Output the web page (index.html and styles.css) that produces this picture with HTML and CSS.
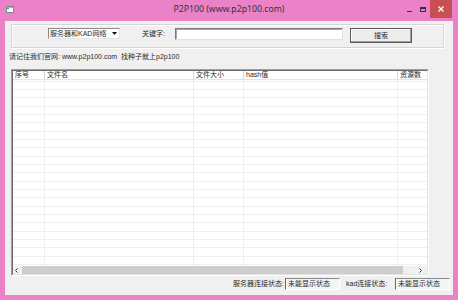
FILE: index.html
```html
<!DOCTYPE html>
<html lang="zh-CN">
<head>
<meta charset="utf-8">
<title>P2P100</title>
<link rel="stylesheet" href="styles.css">
</head>
<body>
<div class="window">
  <div class="titlebar">
    <div class="app-icon">
      <svg width="8" height="7" viewBox="0 0 8 7"><rect x="0.5" y="0.5" width="7" height="6" fill="#fff" stroke="#7d8c8c"/><rect x="1" y="1" width="2" height="2" fill="#3aa37a"/><rect x="1" y="1" width="6" height="1" fill="#9fb5c8"/></svg>
    </div>
    <div class="title">P2P100 (www.p2p100.com)</div>
    <div class="controls">
      <span class="ctl min"><span class="dash"></span></span>
      <span class="ctl max"><span class="square"></span></span>
      <span class="ctl close"><svg width="6" height="6" viewBox="0 0 6 6"><path d="M0.5 0.5L5.5 5.5M5.5 0.5L0.5 5.5" stroke="#fff" stroke-width="1.3"/></svg></span>
    </div>
  </div>
  <div class="client">
    <div class="groupbox">
      <div class="combo">
        <span class="combo-text">服务器和KAD网络</span>
        <span class="combo-btn"><svg width="5" height="3" viewBox="0 0 5 3"><path d="M0 0H5L2.5 3Z" fill="#111"/></svg></span>
      </div>
      <span class="kw-label">关键字:</span>
      <div class="input"></div>
      <div class="button">搜索</div>
    </div>
    <div class="info">请记住我们官网: www.p2p100.com&nbsp;&nbsp;找种子就上p2p100</div>
    <div class="list">
      <div class="list-inner">
        <div class="header">
          <div class="hcol c1">序号</div>
          <div class="hcol c2">文件名</div>
          <div class="hcol c3">文件大小</div>
          <div class="hcol c4">hash值</div>
          <div class="hcol c5">资源数</div>
        </div>
        <div class="body">
          <div class="bcol c1"></div>
          <div class="bcol c2"></div>
          <div class="bcol c3"></div>
          <div class="bcol c4"></div>
          <div class="bcol c5"></div>
        </div>
        <div class="hscroll">
          <span class="arrow left"><svg width="3" height="5" viewBox="0 0 3 5"><path d="M2.5 0.5L0.5 2.5L2.5 4.5" fill="none" stroke="#333" stroke-width="1"/></svg></span>
          <span class="thumb"></span>
          <span class="track"></span>
          <span class="arrow right"><svg width="3" height="5" viewBox="0 0 3 5"><path d="M0.5 0.5L2.5 2.5L0.5 4.5" fill="none" stroke="#333" stroke-width="1"/></svg></span>
        </div>
      </div>
    </div>
    <div class="status">
      <span class="st-label l1">服务器连接状态:</span>
      <span class="st-box">未能显示状态</span>
      <span class="st-label l2">kad连接状态:</span>
      <span class="st-box">未能显示状态</span>
    </div>
  </div>
</div>
</body>
</html>
```
FILE: styles.css
```css
* { box-sizing: border-box; }
html, body { margin: 0; padding: 0; }
body {
  width: 458px;
  height: 300px;
  overflow: hidden;
  background: #eb82c8;
  font-family: "Liberation Sans", "Noto Sans CJK SC", sans-serif;
  font-size: 7px;
  color: #2a2a2a;
}
.window {
  width: 458px;
  height: 300px;
  display: flex;
  flex-direction: column;
  background: #eb82c8;
}
.titlebar {
  height: 21px;
  flex: none;
  display: grid;
  grid-template-columns: 1fr auto 1fr;
  align-items: start;
}
.app-icon { padding: 6px 0 0 6px; height: 21px; }
.app-icon svg { display: block; }
.title {
  font-family: "Noto Sans", sans-serif;
  font-size: 8.7px;
  line-height: 19px;
  color: #333;
  white-space: nowrap;
}
.controls {
  display: flex;
  justify-content: flex-end;
  padding-right: 6px;
}
.ctl {
  height: 18px;
  display: flex;
  align-items: center;
  justify-content: center;
}
.min { width: 14px; }
.max { width: 14px; }
.close { width: 22px; background: #c75050; }
.close svg { display: block; }
.dash { width: 5px; height: 1px; background: #333; margin-top: 4px; }
.square { width: 6px; height: 5px; border: 1px solid #333; border-top-width: 2px; }

.client {
  flex: 1;
  margin: 0 5px 5px 5px;
  background: #f0f0f0;
  display: flex;
  flex-direction: column;
}
.groupbox {
  margin: 3px 0 0 6px;
  width: 433px;
  height: 24px;
  border: 1px solid #d5d5d5;
  box-shadow: inset 1px 1px 0 #fff, 1px 1px 0 #fff;
  display: flex;
  align-items: flex-start;
  padding-top: 3px;
}
.combo {
  margin-left: 36px;
  width: 72px;
  height: 11px;
  background: #fff;
  border: 1px solid;
  border-color: #8a8a8a #e3e3e3 #e3e3e3 #8a8a8a;
  display: flex;
  align-items: center;
}
.combo-text {
  flex: 1;
  padding-left: 1px;
  line-height: 9px;
  white-space: nowrap;
  overflow: hidden;
}
.combo-btn {
  width: 10px;
  height: 9px;
  display: flex;
  align-items: center;
  justify-content: center;
}
.combo-btn svg { display: block; }
.kw-label {
  margin-left: 22px;
  width: 33px;
  line-height: 12px;
  white-space: nowrap;
}
.input {
  width: 168px;
  height: 12px;
  background: #fff;
  border: 1px solid;
  border-color: #7a7a7a #e3e3e3 #e3e3e3 #7a7a7a;
  box-shadow: inset 1px 1px 0 #a8a8a8;
}
.button {
  margin-left: 7px;
  width: 62px;
  height: 15px;
  background: #ececec;
  border: 1px solid #5a5a5a;
  box-shadow: inset -1px -1px 0 #a0a0a0, inset 1px 1px 0 #fff;
  text-align: center;
  line-height: 13px;
}
.info {
  margin-top: 4px;
  padding-left: 4px;
  height: 10px;
  line-height: 10px;
  white-space: nowrap;
}
.list {
  margin: 7px 0 0 6px;
  width: 418px;
  height: 207px;
  border: 1px solid;
  border-color: #a0a0a0 #fff #fff #a0a0a0;
  flex: none;
}
.list-inner {
  height: 100%;
  border: 1px solid;
  border-color: #696969 #e3e3e3 #e3e3e3 #696969;
  background: #fff;
  display: flex;
  flex-direction: column;
}
.header {
  height: 9px;
  flex: none;
  display: flex;
  border-bottom: 1px solid #e5e5e5;
  overflow: hidden;
}
.hcol {
  height: 8px;
  line-height: 8px;
  padding-left: 2px;
  border-right: 1px solid #d5d5d5;
  white-space: nowrap;
  flex: none;
}
.c1 { width: 32px; }
.c2 { width: 149px; }
.c3 { width: 50px; }
.c4 { width: 154px; }
.c5 { width: 30px; }
.body {
  flex: 1;
  display: flex;
  background: repeating-linear-gradient(to bottom,
    transparent 0 1px, #efefef 1px 2px,
    transparent 2px 9px, #efefef 9px 10px,
    transparent 10px 17px, #efefef 17px 18px,
    transparent 18px 25px);
}
.bcol { border-right: 1px solid #efefef; flex: none; }
.bcol.c5 { border-right: none; }
.hscroll {
  height: 8px;
  flex: none;
  display: flex;
  background: #f0f0f0;
}
.arrow {
  display: flex;
  align-items: center;
  flex: none;
}
.arrow svg { display: block; }
.arrow.left { width: 9px; padding-left: 2px; }
.arrow.right { width: 13px; justify-content: center; }
.thumb { width: 381px; background: #cdcdcd; flex: none; }
.track { flex: 1; }
.status {
  margin-top: 1px;
  padding-left: 228px;
  display: flex;
  align-items: center;
  height: 14px;
}
.st-label {
  white-space: nowrap;
  line-height: 12px;
}
.l1 { width: 52px; }
.l2 { width: 49px; margin-left: 6px; }
.st-box {
  width: 55px;
  height: 12px;
  line-height: 10px;
  padding-left: 2px;
  border: 1px solid;
  border-color: #8a8a8a #fff #fff #6a6a6a;
  background: #f4f4f4;
  white-space: nowrap;
}
```
